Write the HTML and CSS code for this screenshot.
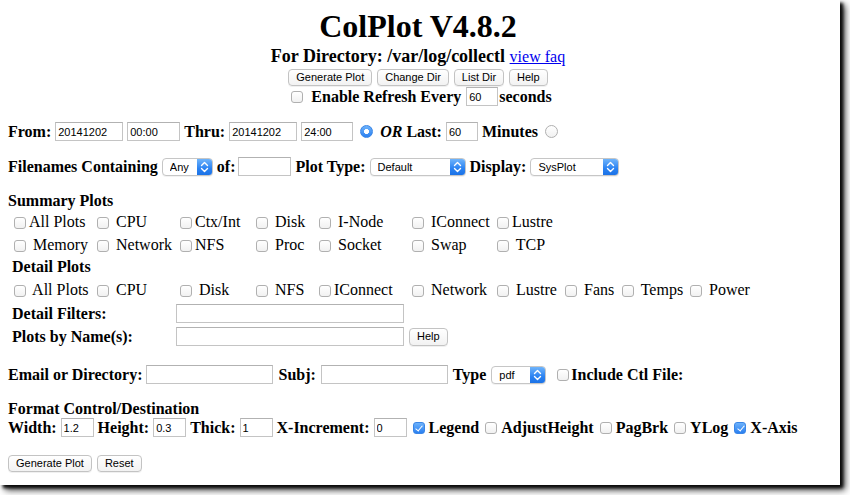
FILE: index.html
```html
<!DOCTYPE html>
<html lang="en">
<head>
<meta charset="utf-8">
<title>ColPlot V4.8.2</title>
<link rel="stylesheet" href="styles.css">
</head>
<body>
<div class="page">
  <form class="form">
    <h1 class="title">ColPlot V4.8.2</h1>
    <div class="dir"><b>For Directory: /var/log/collectl</b> <a href="#" class="faq">view faq</a></div>
    <div class="btnrow">
      <button type="button" class="btn">Generate Plot</button>
      <button type="button" class="btn">Change Dir</button>
      <button type="button" class="btn">List Dir</button>
      <button type="button" class="btn">Help</button>
    </div>
    <div class="refresh">
      <input type="checkbox" class="cb cb-refresh">
      <b>Enable Refresh Every</b>
      <input type="text" class="txt w32 refresh-in" value="60">
      <b>seconds</b>
    </div>

    <div class="row from-row">
      <b>From:</b>
      <input type="text" class="txt w68" value="20141202">
      <input type="text" class="txt w53" value="00:00">
      <b>Thru:</b>
      <input type="text" class="txt w68" value="20141202">
      <input type="text" class="txt w52" value="24:00">
      <input type="radio" name="range" class="rd" checked>
      <b><i>OR</i> Last:</b>
      <input type="text" class="txt w32" value="60">
      <b>Minutes</b>
      <input type="radio" name="range" class="rd">
    </div>

    <div class="row file-row">
      <b>Filenames Containing</b>
      <span class="sel w51"><select><option>Any</option></select><span class="arrow"><svg viewBox="0 0 15 16" width="15" height="16"><path d="M4.5 6.5 L7.5 3.5 L10.5 6.5 M4.5 9.5 L7.5 12.5 L10.5 9.5" fill="none" stroke="#fff" stroke-width="1.4" stroke-linecap="round" stroke-linejoin="round"/></svg></span></span>
      <b class="of">of:</b>
      <input type="text" class="txt w53" value="">
      <b>Plot Type:</b>
      <span class="sel w96"><select><option>Default</option></select><span class="arrow"><svg viewBox="0 0 15 16" width="15" height="16"><path d="M4.5 6.5 L7.5 3.5 L10.5 6.5 M4.5 9.5 L7.5 12.5 L10.5 9.5" fill="none" stroke="#fff" stroke-width="1.4" stroke-linecap="round" stroke-linejoin="round"/></svg></span></span>
      <b>Display:</b>
      <span class="sel w89"><select><option>SysPlot</option></select><span class="arrow"><svg viewBox="0 0 15 16" width="15" height="16"><path d="M4.5 6.5 L7.5 3.5 L10.5 6.5 M4.5 9.5 L7.5 12.5 L10.5 9.5" fill="none" stroke="#fff" stroke-width="1.4" stroke-linecap="round" stroke-linejoin="round"/></svg></span></span>
    </div>

    <div class="heading summary-h">Summary Plots</div>
    <div class="cbgrid">
      <label class="cell"><input type="checkbox" class="cb">All Plots</label>
      <label class="cell"><input type="checkbox" class="cb"> CPU</label>
      <label class="cell"><input type="checkbox" class="cb">Ctx/Int</label>
      <label class="cell"><input type="checkbox" class="cb"> Disk</label>
      <label class="cell"><input type="checkbox" class="cb"> I-Node</label>
      <label class="cell"><input type="checkbox" class="cb"> IConnect</label>
      <label class="cell"><input type="checkbox" class="cb">Lustre</label>
      <span class="cell"></span><span class="cell"></span><span class="cell"></span>

      <label class="cell"><input type="checkbox" class="cb"> Memory</label>
      <label class="cell"><input type="checkbox" class="cb"> Network</label>
      <label class="cell"><input type="checkbox" class="cb">NFS</label>
      <label class="cell"><input type="checkbox" class="cb"> Proc</label>
      <label class="cell"><input type="checkbox" class="cb"> Socket</label>
      <label class="cell"><input type="checkbox" class="cb"> Swap</label>
      <label class="cell"><input type="checkbox" class="cb"> TCP</label>
      <span class="cell"></span><span class="cell"></span><span class="cell"></span>
    </div>

    <div class="heading detail-h">Detail Plots</div>
    <div class="cbgrid detail-grid">
      <label class="cell"><input type="checkbox" class="cb"> All Plots</label>
      <label class="cell"><input type="checkbox" class="cb"> CPU</label>
      <label class="cell"><input type="checkbox" class="cb"> Disk</label>
      <label class="cell"><input type="checkbox" class="cb"> NFS</label>
      <label class="cell"><input type="checkbox" class="cb">IConnect</label>
      <label class="cell"><input type="checkbox" class="cb"> Network</label>
      <label class="cell"><input type="checkbox" class="cb"> Lustre</label>
      <label class="cell"><input type="checkbox" class="cb"> Fans</label>
      <label class="cell"><input type="checkbox" class="cb"> Temps</label>
      <label class="cell"><input type="checkbox" class="cb"> Power</label>
    </div>

    <div class="row frow filt-row">
      <b class="flabel">Detail Filters:</b>
      <input type="text" class="txt w228" value="">
    </div>
    <div class="row frow name-row">
      <b class="flabel">Plots by Name(s):</b>
      <input type="text" class="txt w228" value="">
      <button type="button" class="btn help-btn">Help</button>
    </div>

    <div class="row mail-row">
      <b>Email or Directory:</b>
      <input type="text" class="txt w127 mail-in" value="">
      <b>Subj:</b>
      <input type="text" class="txt w127" value="">
      <b>Type</b>
      <span class="sel w55"><select><option>pdf</option></select><span class="arrow"><svg viewBox="0 0 15 16" width="15" height="16"><path d="M4.5 6.5 L7.5 3.5 L10.5 6.5 M4.5 9.5 L7.5 12.5 L10.5 9.5" fill="none" stroke="#fff" stroke-width="1.4" stroke-linecap="round" stroke-linejoin="round"/></svg></span></span>
      <input type="checkbox" class="cb cb-ctl">
      <b>Include Ctl File:</b>
    </div>

    <div class="heading format-h">Format Control/Destination</div>
    <div class="row fmt-row">
      <b>Width:</b>
      <input type="text" class="txt w33" value="1.2">
      <b>Height:</b>
      <input type="text" class="txt w33" value="0.3">
      <b>Thick:</b>
      <input type="text" class="txt w33" value="1">
      <b>X-Increment:</b>
      <input type="text" class="txt w33" value="0">
      <input type="checkbox" class="cb cb-fmt" checked>
      <b>Legend</b>
      <input type="checkbox" class="cb cb-fmt">
      <b>AdjustHeight</b>
      <input type="checkbox" class="cb cb-fmt">
      <b>PagBrk</b>
      <input type="checkbox" class="cb cb-fmt">
      <b>YLog</b>
      <input type="checkbox" class="cb cb-fmt" checked>
      <b>X-Axis</b>
    </div>

    <div class="actions">
      <button type="button" class="btn">Generate Plot</button>
      <button type="button" class="btn">Reset</button>
    </div>
  </form>
</div>
</body>
</html>
```
FILE: styles.css
```css
* { box-sizing: border-box; }

html, body {
  margin: 0;
  padding: 0;
  background: #fff;
}

body {
  font-family: "Liberation Serif", "Times New Roman", serif;
  font-size: 16px;
  color: #000;
  min-height: 495px;
  padding-bottom: 10px;
}

.page {
  width: 840px;
  height: 485px;
  padding: 8px 12px 0 8px;
  background: #fff;
  box-shadow: 3px 3px 3px rgba(0, 0, 0, 0.9), 5px 5px 7px rgba(0, 0, 0, 0.75);
}

.title {
  margin: 0;
  font-size: 32px;
  line-height: 36px;
  font-weight: bold;
  text-align: center;
}

.dir {
  margin-top: 2px;
  text-align: center;
  font-size: 18px;
  line-height: 20px;
}

.faq {
  font-size: 16px;
  color: #0000ee;
}

.btnrow {
  margin-top: 2px;
  display: flex;
  justify-content: center;
  gap: 5px;
}

.btn {
  height: 17px;
  padding: 0 7px;
  font-family: "Liberation Sans", Arial, sans-serif;
  font-size: 11px;
  line-height: 15px;
  color: #000;
  border: 1px solid #c3c3c3;
  border-radius: 4px;
  background: linear-gradient(#ffffff, #f2f2f2);
  box-shadow: 0 1px 0 rgba(0, 0, 0, 0.06);
}

.row {
  display: flex;
  align-items: center;
  gap: 4px;
  height: 19px;
  line-height: 18px;
  white-space: nowrap;
}

.txt {
  height: 19px;
  margin: 0;
  padding: 0 2px;
  font-family: "Liberation Sans", Arial, sans-serif;
  font-size: 11px;
  color: #000;
  border: 1px solid #c4c4c4;
  border-top-color: #b2b2b2;
  background: #fff;
  outline: none;
}

.w32 { width: 32px; }
.w33 { width: 33px; }
.w52 { width: 52px; }
.w53 { width: 53px; }
.w68 { width: 68px; }
.w127 { width: 127px; }
.w228 { width: 228px; }

.sel {
  display: inline-flex;
  height: 18px;
  border: 1px solid #c6c6c6;
  border-radius: 4px;
  background: #fff;
  overflow: hidden;
  box-shadow: 0 1px 0 rgba(0, 0, 0, 0.05);
}

.sel select {
  flex: 1;
  min-width: 0;
  height: 16px;
  margin: 0;
  padding: 0 0 0 7px;
  border: 0;
  background: transparent;
  appearance: none;
  -webkit-appearance: none;
  font-family: "Liberation Sans", Arial, sans-serif;
  font-size: 11px;
  color: #000;
  outline: none;
}

.sel .arrow {
  display: flex;
  align-items: center;
  justify-content: center;
  width: 15px;
  height: 16px;
  background: linear-gradient(#6fb4fb, #2a82f2 60%, #1c72e6);
}

.w51 { width: 51px; }
.w55 { width: 55px; }
.w89 { width: 89px; }
.w96 { width: 96px; }

.cb {
  appearance: none;
  -webkit-appearance: none;
  position: relative;
  width: 12px;
  height: 12px;
  margin: 0 3px 0 0;
  border: 1px solid #b0b0b0;
  border-radius: 3px;
  background: linear-gradient(#ffffff, #f1f1f1);
  vertical-align: middle;
  flex: none;
}

.cb:checked {
  border-color: #3a86e6;
  background: linear-gradient(#6db2fb, #2a80f1);
}

.cb:checked::after {
  content: "";
  position: absolute;
  left: 3.5px;
  top: 1px;
  width: 3px;
  height: 6px;
  border: solid #fff;
  border-width: 0 1.6px 1.6px 0;
  transform: rotate(40deg);
}

.rd {
  appearance: none;
  -webkit-appearance: none;
  width: 13px;
  height: 13px;
  margin: 0 3px;
  border: 1px solid #b0b0b0;
  border-radius: 50%;
  background: linear-gradient(#ffffff, #f1f1f1);
  flex: none;
}

.rd:checked {
  border-color: #3a86e6;
  background: radial-gradient(circle, #fff 0 2.2px, transparent 2.8px), linear-gradient(#6db2fb, #2a80f1);
}

/* row-specific placement (after generic control rules so they win) */
.refresh {
  margin-top: 1px;
  display: flex;
  justify-content: center;
  align-items: center;
  height: 19px;
  padding-left: 7px;
  line-height: 18px;
  white-space: nowrap;
}

.refresh .cb-refresh { margin: 0 8px 0 0; }
.refresh .refresh-in { margin: 0 1px 0 5px; }

.from-row { margin-top: 16px; }
.file-row { margin-top: 16px; }
.of { margin-right: -1px; }

.heading {
  font-weight: bold;
  line-height: 18px;
  height: 18px;
}

.summary-h { margin-top: 16px; }
.detail-h { margin-top: 2px; padding-left: 4px; }
.format-h { margin-top: 16px; }

.cbgrid {
  display: grid;
  grid-template-columns: 83px 83px 76px 63px 93px 85px 68px 57px 68px 80px;
  grid-auto-rows: 23px;
  margin-left: 6px;
  line-height: 23px;
  white-space: nowrap;
}

.detail-grid { margin-top: 2px; }

.cell { display: block; }

.frow { margin-top: 3px; padding-left: 4px; gap: 0; }
.name-row { margin-top: 4px; }
.flabel { width: 164px; }
.name-row .help-btn { margin-left: 5px; height: 18px; }

.mail-row { margin-top: 19px; gap: 5px; }
.mail-row .mail-in { margin-left: -1px; }
.mail-row .cb-ctl { margin: 0 -3px 0 6px; }

.fmt-row { gap: 4px; }
.fmt-row .cb-fmt { margin: 0 0 0 2px; }

.actions {
  margin-top: 18px;
  display: flex;
  gap: 5px;
}
```
